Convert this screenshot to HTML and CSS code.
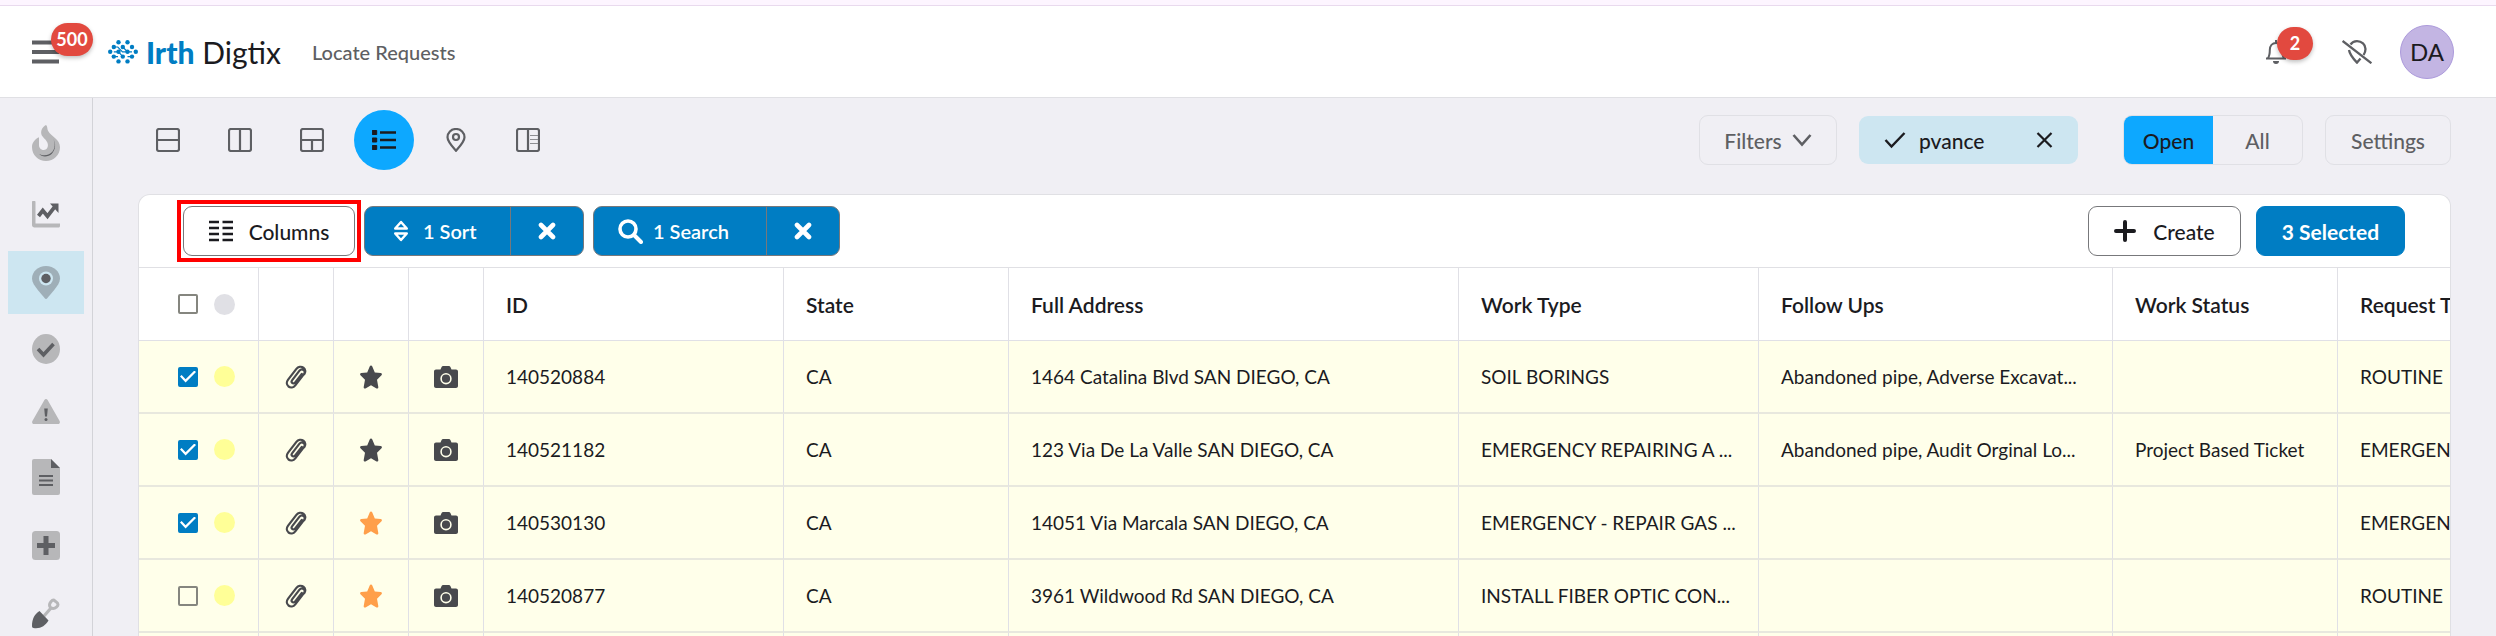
FILE: index.html
```html
<!DOCTYPE html>
<html lang="en">
<head>
<meta charset="utf-8">
<title>Locate Requests</title>
<link rel="stylesheet" href="styles.css">
</head>
<body>
<svg class="sprite" aria-hidden="true">
  <symbol id="clip" viewBox="0 0 22 26"><path d="M16.800 9.800 10.200 18.300c-1 1.300-2.200 1.300-3 .6-.8-.7-.8-1.800 0-2.800l7.300-9.400c1.200-1.500 2.900-1.600 4.100-.7 1.300 1 1.400 2.700.3 4.200l-8.600 11.100c-1.900 2.400-4.800 2.700-6.800 1.200-2.100-1.700-2.200-4.600-.4-6.900l8.300-10.700c1.700-2.200 4.800-2.800 7-1.200 2.200 1.700 2.500 4.400.8 6.600" fill="none" stroke="currentColor" stroke-width="2.200" stroke-linecap="round" stroke-linejoin="round"/></symbol>
  <symbol id="star" viewBox="0 0 22 24"><path d="M11 .5c.6 0 1 .4 1.300 1l2.500 6 6 .6c1.100.1 1.500 1.300.7 2.100l-4.500 4.500 1.300 7.300c.2 1.200-.8 1.900-1.800 1.400L11 20.200l-5.500 3.200c-1 .5-2-.2-1.800-1.400L5 14.700.5 10.200c-.8-.8-.4-2 .7-2.100l6-.6 2.500-6c.3-.6.7-1 1.300-1z" fill="currentColor"/></symbol>
  <symbol id="camera" viewBox="0 0 24 22"><path fill-rule="evenodd" d="M2 3.500h4.500L7.600 1c.3-.6.8-1 1.500-1h5.800c.7 0 1.200.4 1.500 1l1.100 2.500H22c1.100 0 2 .8 2 1.900V20c0 1.100-.9 2-2 2H2c-1.100 0-2-.9-2-2V5.400c0-1.100.9-1.900 2-1.900zM12 7a5.700 5.700 0 1 0 0 11.400A5.700 5.700 0 0 0 12 7zm0 1.600a4.100 4.100 0 1 1 0 8.200 4.100 4.100 0 0 1 0-8.200z" fill="currentColor"/></symbol>
  <symbol id="cross" viewBox="0 0 18 18"><path d="M3 3l12 12M15 3 3 15" stroke="currentColor" stroke-width="4.600" stroke-linecap="round"/></symbol>
</svg>

<div class="strip"></div>
<header class="header">
  <button class="icon-btn menu" aria-label="Menu">
    <svg width="27" height="24" viewBox="0 0 27 24"><path d="M0 2.500h27M0 12h27M0 21.500h27" stroke="#5e5f63" stroke-width="4"/></svg>
    <span class="badge badge-menu">500</span>
  </button>
  <a class="brand" href="#">
    <svg width="30" height="24" viewBox="0 0 30 24" fill="#007dc3" stroke="#007dc3">
      <g stroke="none"><circle cx="10.500" cy="2.200" r="2.200"/><circle cx="19.500" cy="2.200" r="2.200"/><circle cx="5.800" cy="7" r="2.200"/><circle cx="14.800" cy="7" r="2.200"/><circle cx="24" cy="7" r="2.200"/><circle cx="2.200" cy="11.800" r="2.200"/><circle cx="10.500" cy="11.800" r="2.200"/><circle cx="19.500" cy="11.800" r="2.200"/><circle cx="27.800" cy="11.800" r="2.200"/><circle cx="5.800" cy="16.600" r="2.200"/><circle cx="14.800" cy="16.600" r="2.200"/><circle cx="24" cy="16.600" r="2.200"/><circle cx="10.500" cy="21.400" r="2.200"/><circle cx="19.500" cy="21.400" r="2.200"/></g>
      <path d="M5.800 7h4l4.700 4.800h5M14.800 7l4.700 4.800M10.500 11.800l4.300 4.800M5.800 11.800h4.700M19.500 16.600H24M19.500 11.800l4.500 0M6 16.600h4" fill="none" stroke-width="1.200"/>
    </svg>
    <span class="brand-name"><b>Irth</b> Digtix</span>
  </a>
  <h1 class="page-title">Locate Requests</h1>
  <div class="header-right">
    <button class="icon-btn bell" aria-label="Notifications">
      <svg width="22" height="24" viewBox="0 0 22 24"><path d="M1 18.500h20M3 18c1.500-2 1.800-4 1.800-8 0-4 2.500-7 6.200-7s6.200 3 6.200 7c0 4 .3 6 1.800 8M11 0v3" fill="none" stroke="#5e5f63" stroke-width="2"/><path d="M8 21h6a3 3 0 0 1-6 0z" fill="#5e5f63"/></svg>
      <span class="badge badge-bell">2</span>
    </button>
    <button class="icon-btn" aria-label="Location off">
      <svg width="30" height="24" viewBox="0 0 30 24" fill="none" stroke="#5e5f63" stroke-width="2.300"><path d="M.6 1 29.400 23.200M8.500 4.500C10 2.300 12.300 1.200 15 1.200c4.700 0 8.500 3.300 8.500 7.800 0 2.200-.7 4-1.900 6M7 10c.7 4.200 4 8.500 8 12.600l3.500-4"/></svg>
    </button>
    <button class="avatar">DA</button>
  </div>
</header>

<div class="shell">
  <nav class="sidebar">
    <a href="#" aria-label="Hot"><svg width="28" height="38" viewBox="0 0 28 38"><path d="M14 0c-3.600 2-5.300 5.200-4.700 9 .5 3 5.900 6 6.500 10 .6 3.300-1.200 5.900-4 5.900-3 0-4.800-2.200-4.800-5V12.300C2.500 14.300 0 18 0 22.200 0 30 6.300 36 14 36s14-6 14-13.800c0-8-8.600-10.200-12-16.400C15 3.900 15.600 1 14 0z" fill="#b7b7b9"/><path d="M21.300 14c2.700 5 1.700 12.600-4.300 15.300-3 1.400-7 1.300-9.800-.3 2.600 3.300 9.200 3.200 12.600-.3 3.900-4 4.300-10.500 1.500-14.700z" fill="#5e5f63"/></svg></a>
    <a href="#" aria-label="Trends"><svg width="28" height="33" viewBox="0 0 28 33"><path d="M1 3h1.500c.6 0 1 .4 1 1v21.500H28V28c0 .8-.6 1.500-1.500 1.500h-24C1 29.500 0 28.500 0 27V4c0-.6.400-1 1-1z" fill="#b7b7b9"/><path d="m6.500 18 4.300-5.500 4.700 5.700 7-9" fill="none" stroke="#5e5f63" stroke-width="3.800"/><path d="M18 5.500h8.500V15z" fill="#5e5f63"/></svg></a>
    <a class="active" href="#" aria-label="Locations"><svg width="28" height="33" viewBox="0 0 28 33"><path d="M14 0c8 0 14 5.700 14 12.600 0 3.900-3 7.900-6 11.600L15 32.500c-.6.700-1.400.7-2 0L6 24.200C3 20.500 0 16.500 0 12.600 0 5.700 6 0 14 0z" fill="#9fafb8"/><circle cx="14" cy="12.500" r="7" fill="#cde6f1"/><circle cx="14" cy="12.500" r="4.700" fill="#5e5f63"/></svg></a>
    <a href="#" aria-label="Completed"><svg width="28" height="30" viewBox="0 0 28 30"><ellipse cx="14" cy="15" rx="14" ry="15" fill="#b7b7b9"/><path d="m6 15 5.500 5.800L21.500 10" fill="none" stroke="#5e5f63" stroke-width="3.600"/></svg></a>
    <a href="#" aria-label="Alerts"><svg width="28" height="25" viewBox="0 0 28 25"><path d="M12.400 1c.7-1.300 2.500-1.300 3.200 0l12 21c.7 1.500.1 3-1.600 3H2c-1.700 0-2.300-1.500-1.600-3z" fill="#b7b7b9"/><path d="M12.200 9.500h3.600l-.8 8h-2z" fill="#5e5f63"/><circle cx="14" cy="20.500" r="1.500" fill="#5e5f63"/></svg></a>
    <a href="#" aria-label="Documents"><svg width="28" height="36" viewBox="0 0 28 36"><path d="M2 0h17l9 9v25a2 2 0 0 1-2 2H2a2 2 0 0 1-2-2V2a2 2 0 0 1 2-2z" fill="#b7b7b9"/><path d="M19 0l9 9h-9zM7 16h14v2H7zM7 20.500h14v2H7zM7 25h14v2H7z" fill="#5e5f63"/></svg></a>
    <a href="#" aria-label="Add"><svg width="28" height="31" viewBox="0 0 28 31"><rect y="1" width="28" height="29" rx="3.500" fill="#b7b7b9"/><path d="M14 6v19M5 15.500h18" stroke="#5e5f63" stroke-width="5"/></svg></a>
    <a href="#" aria-label="Excavation"><svg width="28" height="34" viewBox="0 0 28 34"><path d="M12 20l7-8" stroke="#b7b7b9" stroke-width="3.200"/><path d="M21.500 4c1 0 1.200 1 2.200 1.500 1 .6 2.300 2 2.300 3 0 1.700-2.600 4-4.800 4C19 12.500 17.500 10.800 17.500 9c0-2 2.500-5 4-5z" fill="none" stroke="#b7b7b9" stroke-width="3"/><path d="M7.500 15 16.500 24.500C13 30 8.500 33 1.500 32 .5 32 0 31 0 30c0-7 2.500-12 7.500-15z" fill="#5e5f63"/></svg></a>
  </nav>

  <main class="main">
    <div class="view-bar">
      <div class="views">
        <button class="view" aria-label="Split rows"><svg width="24" height="24" viewBox="0 0 24 24"><path d="M3 1h18a2 2 0 0 1 2 2v18a2 2 0 0 1-2 2H3a2 2 0 0 1-2-2V3a2 2 0 0 1 2-2zM1 12h22"/></svg></button>
        <button class="view" aria-label="Split columns"><svg width="24" height="24" viewBox="0 0 24 24"><path d="M3 1h18a2 2 0 0 1 2 2v18a2 2 0 0 1-2 2H3a2 2 0 0 1-2-2V3a2 2 0 0 1 2-2zM12 1v22"/></svg></button>
        <button class="view" aria-label="Three panes"><svg width="24" height="24" viewBox="0 0 24 24"><path d="M3 1h18a2 2 0 0 1 2 2v18a2 2 0 0 1-2 2H3a2 2 0 0 1-2-2V3a2 2 0 0 1 2-2zM1 12h22M12 12v11"/></svg></button>
        <button class="view current" aria-label="List"><svg width="24" height="22" viewBox="0 0 24 22"><path d="M8 3.500h16M8 11h16M8 18.500h16" stroke-width="2.600"/><path d="M.3 1.500h4.400v4H.3zM.3 9h4.400v4H.3zM.3 16.500h4.400v4H.3z" fill="#1b1b1f" stroke-width="1"/></svg></button>
        <button class="view" aria-label="Map"><svg width="20" height="24" viewBox="0 0 20 24"><path d="M10 1c5 0 8.500 3.700 8.500 8.300 0 4.300-4.500 9-8.500 13.500C6 18.300 1.500 13.600 1.500 9.300 1.500 4.700 5 1 10 1z"/><circle cx="10" cy="9" r="3"/></svg></button>
        <button class="view" aria-label="Details"><svg width="24" height="24" viewBox="0 0 24 24"><path d="M3 1h18a2 2 0 0 1 2 2v18a2 2 0 0 1-2 2H3a2 2 0 0 1-2-2V3a2 2 0 0 1 2-2zM12 1v22"/><path d="M14 7.500h8M14 11.500h8M14 15.500h8" stroke="#8d8e92" stroke-width="1"/></svg></button>
      </div>
      <div class="filters">
        <button class="outline filter-btn">Filters <svg width="20" height="16" viewBox="0 0 20 16"><path d="m1.500 3 8.500 9.500L18.500 3" fill="none" stroke="currentColor" stroke-width="2.600"/></svg></button>
        <div class="chip">
          <svg width="22" height="18" viewBox="0 0 22 18"><path d="m1.500 9 6 6.500L20.500 2" fill="none" stroke="currentColor" stroke-width="2.400"/></svg>
          <span>pvance</span>
          <button class="chip-close" aria-label="Remove pvance"><svg width="17" height="16" viewBox="0 0 17 16"><path d="m1.500 1 14 14M15.500 1l-14 14" stroke="currentColor" stroke-width="2.200"/></svg></button>
        </div>
        <div class="toggle"><button class="on">Open</button><button>All</button></div>
        <button class="outline settings">Settings</button>
      </div>
    </div>

    <section class="card">
      <div class="toolbar">
        <div class="highlight"><button class="btn columns"><svg width="24" height="22" viewBox="0 0 24 22"><path d="M0 2h10M13.500 2H24M0 8h10M13.500 8H24M0 14h10M13.500 14H24M0 20h10M13.500 20H24" stroke="currentColor" stroke-width="2.400"/></svg>Columns</button></div>
        <div class="split sort">
          <button class="split-main"><svg width="16" height="22" viewBox="0 0 16 22"><path d="m8 2 5.800 6.500H2.200zM8 20l5.800-6.500H2.200z" fill="none" stroke="currentColor" stroke-width="2.400" stroke-linejoin="round"/></svg>1 Sort</button>
          <button class="split-x" aria-label="Clear sort"><svg width="18" height="18"><use href="#cross"/></svg></button>
        </div>
        <div class="split search">
          <button class="split-main"><svg width="25" height="25" viewBox="0 0 25 25"><circle cx="10" cy="10" r="8" fill="none" stroke="currentColor" stroke-width="3.600"/><path d="m16 16 7 7" stroke="currentColor" stroke-width="4" stroke-linecap="round"/></svg>1 Search</button>
          <button class="split-x" aria-label="Clear search"><svg width="18" height="18"><use href="#cross"/></svg></button>
        </div>
        <div class="actions">
          <button class="btn create"><svg width="22" height="22" viewBox="0 0 22 22"><path d="M11 2v18M2 11h18" stroke="currentColor" stroke-width="4" stroke-linecap="round"/></svg>Create</button>
          <button class="btn selected">3 Selected</button>
        </div>
      </div>
      <div class="table-wrap">
        <table class="grid">
          <colgroup><col class="c-pick"><col class="c-icon"><col class="c-icon"><col class="c-icon"><col class="c-300"><col class="c-225"><col class="c-450"><col class="c-300"><col class="c-354"><col class="c-225"><col class="c-225"></colgroup>
          <thead>
            <tr><th><div class="pick"><input type="checkbox" aria-label="Select all"><span class="dot"></span></div></th><th></th><th></th><th></th><th>ID</th><th>State</th><th>Full Address</th><th>Work Type</th><th>Follow Ups</th><th>Work Status</th><th>Request Type</th></tr>
          </thead>
          <tbody>
            <tr><td><div class="pick"><input type="checkbox" checked aria-label="Select 140520884"><span class="dot"></span></div></td><td class="ic"><svg width="22" height="26"><use href="#clip"/></svg></td><td class="ic"><svg width="22" height="24"><use href="#star"/></svg></td><td class="ic"><svg width="24" height="22"><use href="#camera"/></svg></td><td>140520884</td><td>CA</td><td>1464 Catalina Blvd SAN DIEGO, CA</td><td>SOIL BORINGS</td><td>Abandoned pipe, Adverse Excavat...</td><td></td><td>ROUTINE</td></tr>
            <tr><td><div class="pick"><input type="checkbox" checked aria-label="Select 140521182"><span class="dot"></span></div></td><td class="ic"><svg width="22" height="26"><use href="#clip"/></svg></td><td class="ic"><svg width="22" height="24"><use href="#star"/></svg></td><td class="ic"><svg width="24" height="22"><use href="#camera"/></svg></td><td>140521182</td><td>CA</td><td>123 Via De La Valle SAN DIEGO, CA</td><td>EMERGENCY REPAIRING A ...</td><td>Abandoned pipe, Audit Orginal Lo...</td><td>Project Based Ticket</td><td>EMERGENCY</td></tr>
            <tr><td><div class="pick"><input type="checkbox" checked aria-label="Select 140530130"><span class="dot"></span></div></td><td class="ic"><svg width="22" height="26"><use href="#clip"/></svg></td><td class="ic starred"><svg width="22" height="24"><use href="#star"/></svg></td><td class="ic"><svg width="24" height="22"><use href="#camera"/></svg></td><td>140530130</td><td>CA</td><td>14051 Via Marcala SAN DIEGO, CA</td><td>EMERGENCY - REPAIR GAS ...</td><td></td><td></td><td>EMERGENCY</td></tr>
            <tr><td><div class="pick"><input type="checkbox" aria-label="Select 140520877"><span class="dot"></span></div></td><td class="ic"><svg width="22" height="26"><use href="#clip"/></svg></td><td class="ic starred"><svg width="22" height="24"><use href="#star"/></svg></td><td class="ic"><svg width="24" height="22"><use href="#camera"/></svg></td><td>140520877</td><td>CA</td><td>3961 Wildwood Rd SAN DIEGO, CA</td><td>INSTALL FIBER OPTIC CON...</td><td></td><td></td><td>ROUTINE</td></tr>
            <tr><td></td><td></td><td></td><td></td><td></td><td></td><td></td><td></td><td></td><td></td><td></td></tr>
          </tbody>
        </table>
      </div>
    </section>
  </main>
</div>
</body>
</html>
```
FILE: styles.css
```css
* { box-sizing: border-box; }
body {
  margin: 0;
  height: 100vh;
  overflow: hidden;
  display: flex;
  flex-direction: column;
  background: #f0eff4;
  color: #1b1b1f;
  font-family: Lato, "Open Sans", sans-serif;
  font-size: 20px;
}
button {
  font: inherit;
  color: inherit;
  background: none;
  border: 0;
  padding: 0;
  cursor: pointer;
  white-space: nowrap;
}
a { color: inherit; text-decoration: none; }
svg { display: block; flex: none; }
.sprite { display: none; }

.strip {
  flex: none;
  height: 6px;
  background: #fdf5ff;
  border-bottom: 1px solid #e9daee;
}
.header {
  flex: none;
  height: 92px;
  display: flex;
  align-items: center;
  padding: 0 42px 0 32px;
  background: #fff;
  border-bottom: 1px solid #e0e0e4;
}
.icon-btn { position: relative; display: flex; }
.badge {
  position: absolute;
  display: grid;
  place-items: center;
  height: 33px;
  border-radius: 17px;
  background: #e2493f;
  color: #fff;
  font-size: 18px;
  font-weight: 700;
  box-shadow: 0 2px 4px rgba(0, 0, 0, .25);
}
.badge-menu { left: 19px; top: -17px; width: 42px; }
.badge-bell { left: 12px; top: -13px; width: 36px; }
.brand { display: flex; align-items: center; gap: 8px; margin-left: 49px; }
.brand-name { font-size: 30px; line-height: 40px; }
.brand-name b { color: #007dc3; font-weight: 900; }
.page-title { margin: 0 0 0 31px; font-size: 20px; font-weight: 500; color: #5e5f63; }
.header-right { margin-left: auto; display: flex; align-items: center; }
.bell { margin-right: 55px; }
.avatar {
  width: 54px;
  height: 54px;
  margin-left: 28px;
  border-radius: 50%;
  background: #c3b5e3;
  border: 1px solid #ac9adb;
  font-size: 24px;
}

.shell { flex: 1; min-height: 0; display: flex; }
.sidebar {
  flex: none;
  width: 93px;
  display: flex;
  flex-direction: column;
  gap: 5px;
  padding: 12px 8px 0;
  border-right: 1px solid #d3d3d8;
}
.sidebar a { flex: none; display: flex; justify-content: center; padding: 15px 0; }
.sidebar .active { background: #cde6f1; }

.main {
  flex: 1;
  min-width: 0;
  display: flex;
  flex-direction: column;
  padding: 12px 45px 0;
}
.view-bar {
  flex: none;
  display: flex;
  justify-content: space-between;
  align-items: center;
  margin-bottom: 24px;
}
.views { display: flex; gap: 12px; }
.view {
  width: 60px;
  height: 60px;
  display: grid;
  place-items: center;
  border-radius: 50%;
}
.view svg { fill: none; stroke: #5e5f63; stroke-width: 2.2; }
.view.current { background: #0da8ff; }
.view.current svg { stroke: #1b1b1f; }
.filters { display: flex; align-items: center; font-size: 21px; font-weight: 500; color: #5e5f63; }
.outline { height: 50px; border: 1px solid #e0e0e5; border-radius: 9px; }
.filter-btn { width: 138px; display: flex; align-items: center; justify-content: center; gap: 10px; }
.chip {
  width: 219px;
  height: 48px;
  margin-left: 22px;
  padding: 0 25px;
  display: flex;
  align-items: center;
  gap: 13px;
  border-radius: 9px;
  background: #cde6f1;
  color: #1b1b1f;
}
.chip-close { margin-left: auto; }
.toggle {
  display: flex;
  width: 180px;
  height: 50px;
  margin: 0 22px 0 45px;
  border: 1px solid #e0e0e5;
  border-radius: 9px;
  overflow: hidden;
}
.toggle button { flex: 1; }
.toggle .on { background: #0da8ff; color: #1b1b1f; }
.settings { width: 126px; }

.card {
  flex: 1;
  min-height: 0;
  display: flex;
  flex-direction: column;
  background: #fff;
  border: 1px solid #e0e0e4;
  border-bottom: 0;
  border-radius: 12px 12px 0 0;
  overflow: hidden;
}
.toolbar {
  flex: none;
  height: 73px;
  display: flex;
  align-items: center;
  padding: 0 45px 0 38px;
  border-bottom: 1px solid #e0e0e4;
  font-size: 21px;
  font-weight: 500;
}
.highlight { border: 4px solid #f00; padding: 2px; }
.btn {
  height: 50px;
  display: flex;
  align-items: center;
  justify-content: center;
  border: 1px solid #77787b;
  border-radius: 9px;
}
.columns { width: 172px; gap: 16px; }
.split {
  display: flex;
  height: 50px;
  border: 1px solid #77787b;
  border-radius: 9px;
  background: #007dc3;
  color: #fff;
  overflow: hidden;
  font-size: 20px;
  font-weight: 600;
}
.sort { width: 220px; margin: 0 9px 0 3px; }
.search { width: 247px; }
.split-main { flex: 1; display: flex; align-items: center; padding-left: 28px; gap: 14px; }
.search .split-main { padding-left: 24px; gap: 10px; }
.split-x { width: 73px; display: grid; place-items: center; border-left: 1px solid #77787b; }
.actions { display: flex; gap: 15px; margin-left: auto; }
.create { width: 153px; gap: 17px; }
.selected { width: 149px; background: #007dc3; border-color: #007dc3; color: #fff; font-weight: 700; }

.table-wrap { flex: 1; min-height: 0; overflow: hidden; }
.grid {
  width: 2424px;
  table-layout: fixed;
  border-collapse: separate;
  border-spacing: 0;
}
.c-pick { width: 120px; }
.c-icon { width: 75px; }
.c-225 { width: 225px; }
.c-300 { width: 300px; }
.c-354 { width: 354px; }
.c-450 { width: 450px; }
.grid th, .grid td {
  height: 73px;
  padding: 0 0 0 22px;
  text-align: left;
  white-space: nowrap;
  overflow: hidden;
  border-right: 1px solid #e0e0e6;
  border-bottom: 1px solid #e0e0e6;
}
.grid th { font-size: 21px; font-weight: 600; }
.grid td { font-size: 19px; background: #ffffea; border-bottom: 2px solid #e8e8de; }
.grid td.ic { padding: 0; color: #48494d; }
.grid td.starred { color: #ff9f4a; }
.ic svg { margin: 0 auto; }
.pick { display: flex; align-items: center; gap: 16px; padding-left: 17px; }
.dot { width: 21px; height: 21px; border-radius: 50%; background: #ffff97; }
th .dot { background: #e0e0e5; }
.pick input {
  appearance: none;
  display: grid;
  place-items: center;
  width: 20px;
  height: 20px;
  margin: 0;
  border: 2px solid #85867f;
  border-radius: 2px;
}
.pick input:checked { background: #007dc3; border-color: #007dc3; }
.pick input:checked::before {
  content: "";
  width: 16px;
  height: 12px;
  background: #fff;
  clip-path: polygon(0 50%, 10% 38%, 35% 72%, 90% 0, 100% 12%, 35% 100%);
}
```
